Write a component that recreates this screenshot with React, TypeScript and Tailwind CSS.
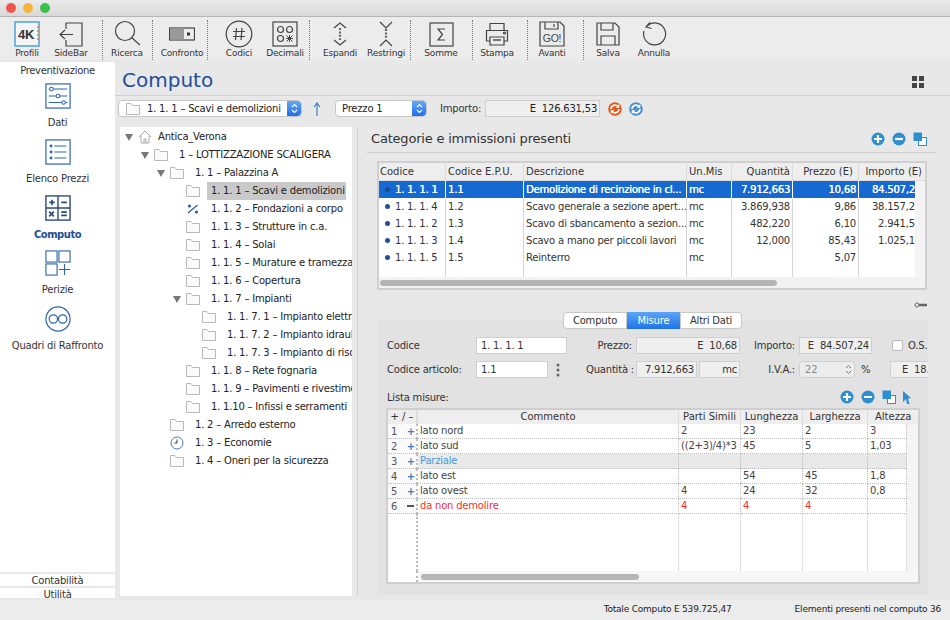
import React from "react";

const B = "#2f66a8";

function Ico({ children, w = 30, h = 30 }: { children: React.ReactNode; w?: number; h?: number }) {
  return (
    <svg width={w} height={h} viewBox={`0 0 ${w} ${h}`} fill="none" stroke="#444" strokeWidth="1.2">
      {children}
    </svg>
  );
}

function Tool({ label, cls, children }: { label: string; cls?: string; children: React.ReactNode }) {
  return (
    <div className={`w-[44px] h-full flex flex-col items-center shrink-0 ${cls ?? ""}`}>
      <div className="h-[30px] flex items-center justify-center">{children}</div>
      <div className="text-[9px] leading-[12px] text-[#333] whitespace-nowrap mt-[-2px]">{label}</div>
    </div>
  );
}

function Sep({ cls }: { cls: string }) {
  return <div className={`w-px h-[40px] mt-px border-l border-dotted border-[#777] shrink-0 ${cls}`} />;
}

function Toolbar() {
  return (
    <div className="h-[43px] bg-[#ececec] flex items-start pt-[2px] shrink-0">
      <Tool label="Profili" cls="ml-[5px]">
        <svg width="26" height="26" viewBox="0 0 26 26">
          <rect x="1" y="1" width="24" height="24" fill="#f4f4f4" stroke="#58a6d8" strokeWidth="1.6" />
          <text x="12" y="18" fontSize="13" fontWeight="700" textAnchor="middle" fill="#333" fontFamily="Liberation Sans, sans-serif">4K</text>
          <path d="M24 5v16" stroke="#d9822b" strokeWidth="1.5" strokeDasharray="2 2" />
        </svg>
      </Tool>
      <Tool label="SideBar">
        <Ico w={26} h={26}>
          <path d="M8 8V2h16v23H8v-6M15 13.5H3M7 9l-5 4.5L7 18" />
        </Ico>
      </Tool>
      <Sep cls="ml-[9px]" />
      <Tool label="Ricerca" cls="ml-[2px]">
        <Ico w={28} h={28}>
          <circle cx="12" cy="11" r="9.5" />
          <path d="M19 18l8 7" />
        </Ico>
      </Tool>
      <Sep cls="ml-[3px]" />
      <Tool label="Confronto" cls="ml-[7px]">
        <Ico w={26} h={14}>
          <rect x="0.5" y="1" width="25" height="12" />
          <rect x="1" y="1.5" width="14" height="11" fill="#999" stroke="none" />
          <rect x="18" y="5.5" width="3" height="3" fill="#333" stroke="none" />
        </Ico>
      </Tool>
      <Sep cls="ml-[3px]" />
      <Tool label="Codici" cls="ml-[9px]">
        <svg width="28" height="28" viewBox="0 0 28 28" fill="none" stroke="#444" strokeWidth="1.2">
          <circle cx="14" cy="14" r="12.8" />
          <path d="M11.5 8l-1 12M17 8l-1 12M8 11.5h12M8 16.5h12" />
        </svg>
      </Tool>
      <Tool label="Decimali" cls="ml-[2px]">
        <Ico w={26} h={26}>
          <rect x="1" y="1" width="24" height="24" />
          <circle cx="8.5" cy="8.5" r="3" />
          <circle cx="17.5" cy="8.5" r="3" />
          <circle cx="8.5" cy="17.5" r="3" />
          <path d="M14.5 14.5l6 6M20.5 14.5l-6 6M17.5 14v7M14 17.5h7" strokeWidth="1" />
        </Ico>
      </Tool>
      <Sep cls="ml-[2px]" />
      <Tool label="Espandi" cls="ml-[8px]">
        <Ico w={16} h={26}>
          <path d="M2 7l6-5 6 5M2 19l6 5 6-5" />
          <path d="M8 7v12" stroke="#666" strokeWidth="2.2" strokeDasharray="2 1.4" />
        </Ico>
      </Tool>
      <Tool label="Restringi" cls="ml-[2px]">
        <Ico w={16} h={26}>
          <path d="M2 1l6 6 6-6M2 25l6-6 6 6" />
          <path d="M8 8v10" stroke="#666" strokeWidth="2.2" strokeDasharray="2 1.4" />
        </Ico>
      </Tool>
      <Sep cls="ml-[2px]" />
      <Tool label="Somme" cls="ml-[8px]">
        <Ico w={25} h={25}>
          <rect x="1" y="1" width="23" height="23" />
          <path d="M16 7H9l4.5 5.5L9 18h7" />
        </Ico>
      </Tool>
      <Sep cls="ml-[9px]" />
      <Tool label="Stampa" cls="ml-[2px]">
        <Ico w={24} h={25}>
          <path d="M5 8V1.5h14V8" />
          <path d="M5 19H1.5V8.5h21V19H19" />
          <path d="M5 15h14v8H5z" />
          <path d="M8 18h8" strokeWidth="2" stroke="#777" />
          <circle cx="19.5" cy="11" r="1" />
        </Ico>
      </Tool>
      <Sep cls="ml-[8px]" />
      <Tool label="Avanti" cls="ml-[2px]">
        <Ico w={26} h={26}>
          <path d="M1 1h20l4 4v20H1z" />
          <path d="M6 1v7h13V1M15 3v3" />
          <text x="13" y="20.5" fontSize="10.5" textAnchor="middle" fill="#444" stroke="none" fontFamily="Liberation Sans, sans-serif">GO!</text>
        </Ico>
      </Tool>
      <Sep cls="ml-[9px]" />
      <Tool label="Salva" cls="ml-[2px]">
        <Ico w={24} h={24}>
          <path d="M1 1h18l4 4v18H1z" />
          <path d="M5 1v7h12V1M5 23v-9h14v9" />
        </Ico>
      </Tool>
      <Tool label="Annulla" cls="ml-[2px]">
        <Ico w={26} h={26}>
          <path d="M6 5a11 11 0 1 1-3 5" />
          <path d="M9 1.5L5 6l5.5 1.5" />
        </Ico>
      </Tool>
    </div>
  );
}

function SideItem({ label, active, cls, children }: { label: string; active?: boolean; cls: string; children: React.ReactNode }) {
  return (
    <div className={`flex flex-col items-center ${cls}`}>
      <div className="w-[26px] h-[26px]">{children}</div>
      <div className={`text-[10px] leading-[12px] mt-[8px] whitespace-nowrap ${active ? "font-bold text-[#234f92] tracking-[-0.5px]" : "text-[#333]"}`}>{label}</div>
    </div>
  );
}

function Sidebar() {
  return (
    <div className="w-[115px] shrink-0 bg-white flex flex-col mt-[2px] h-[536px]">
      <div className="h-[15px] pt-[3px] text-center text-[10px] leading-[12px] text-[#333] tracking-[-0.35px]">Preventivazione</div>
      <SideItem label="Dati" cls="mt-[6px]">
        <svg width="26" height="26" viewBox="0 0 28 28" fill="none" stroke={B} strokeWidth="1.1">
          <rect x="1" y="1" width="26" height="26" strokeWidth="1.3" />
          <path d="M9 6.5h15M4 6.5h1M4 14h8M16 14h8M4 21h14M22 21h2" />
          <circle cx="7" cy="6.5" r="2" />
          <circle cx="14" cy="14" r="2" />
          <circle cx="20" cy="21" r="2" />
        </svg>
      </SideItem>
      <SideItem label="Elenco Prezzi" cls="mt-[10px]">
        <svg width="26" height="26" viewBox="0 0 28 28" fill="none" stroke={B} strokeWidth="1.2">
          <rect x="1" y="1" width="26" height="26" strokeWidth="1.3" />
          <path d="M10 7.5h13M10 14h13M10 20.5h13" />
          <circle cx="6.5" cy="7.5" r="1" fill={B} />
          <circle cx="6.5" cy="14" r="1" fill={B} />
          <circle cx="6.5" cy="20.5" r="1" fill={B} />
        </svg>
      </SideItem>
      <SideItem label="Computo" active cls="mt-[10px]">
        <svg width="26" height="26" viewBox="0 0 28 28" fill="none" stroke="#2b4a78" strokeWidth="1.5">
          <rect x="1" y="1" width="26" height="26" />
          <path d="M14 1v26M1 14h26" />
          <path d="M4.5 8h6M7.5 5v6M17.5 8h6M4.5 18l5 5M9.5 18l-5 5M17.5 18.5h6M17.5 22h6" strokeWidth="1.8" />
        </svg>
      </SideItem>
      <SideItem label="Perizie" cls="mt-[9px]">
        <svg width="26" height="26" viewBox="0 0 28 28" fill="none" stroke={B} strokeWidth="1.2">
          <rect x="1" y="1" width="12" height="12" />
          <rect x="15" y="1" width="12" height="12" />
          <rect x="1" y="15" width="12" height="12" />
          <path d="M21 15v12M15 21h12" />
        </svg>
      </SideItem>
      <SideItem label="Quadri di Raffronto" cls="mt-[10px]">
        <svg width="26" height="26" viewBox="0 0 28 28" fill="none" stroke={B} strokeWidth="1.3">
          <circle cx="14" cy="14" r="13" />
          <circle cx="9" cy="14" r="4.5" />
          <circle cx="19" cy="14" r="4.5" />
        </svg>
      </SideItem>
      <div className="flex-1" />
      <div className="h-[12px] text-center text-[10px] leading-[14px] text-[#333] border-t-2 border-[#e8e8e8] box-content overflow-hidden">Contabilità</div>
      <div className="h-[10px] text-center text-[10px] leading-[13px] text-[#333] border-t-2 border-[#e8e8e8] box-content overflow-hidden">Utilità</div>
    </div>
  );
}

function Folder() {
  return (
    <svg width="14" height="12" fill="#fbfbfb" stroke="#b8b8b8" strokeWidth="1">
      <path d="M.5 11.5V.5h4.5l1.5 2h7v9z" />
    </svg>
  );
}

function Tri() {
  return (
    <svg width="8" height="7" className="mx-auto">
      <path d="M0 0h8L4 7z" fill="#777" />
    </svg>
  );
}

const padCls = ["pl-[4px]", "pl-[20px]", "pl-[36px]", "pl-[52px]", "pl-[68px]"];

function TreeRow({ lvl, text, open, icon, sel, root }: { lvl: number; text: string; open?: boolean; icon?: React.ReactNode; sel?: boolean; root?: boolean }) {
  return (
    <div className={`h-[18px] flex items-center whitespace-nowrap ${padCls[lvl]}`}>
      <div className="w-[10px] shrink-0">{open && <Tri />}</div>
      <div className="w-[14px] ml-[4px] shrink-0 flex justify-center">{icon ?? <Folder />}</div>
      <div className={`${root ? "ml-[6px]" : "ml-[7px] pl-[4px]"} leading-[18px] ${sel ? "bg-[#c9c9c9] w-[139px] shrink-0" : ""}`}>{text}</div>
    </div>
  );
}

function Tree() {
  return (
    <div className="w-[232px] ml-[5px] mt-[10px] h-[469px] bg-white text-[10px] text-[#222] overflow-hidden pt-[1px] shrink-0">
      <TreeRow lvl={0} root open text="Antica_Verona" icon={
        <svg width="14" height="14" fill="none" stroke="#aaa"><path d="M1 7l6-6 6 6M3 6v7h8V6M6 13V9h2v4" /></svg>
      } />
      <TreeRow lvl={1} open text="1 – LOTTIZZAZIONE SCALIGERA" />
      <TreeRow lvl={2} open text="1. 1 – Palazzina A" />
      <TreeRow lvl={3} sel text="1. 1. 1 – Scavi e demolizioni" />
      <TreeRow lvl={3} text="1. 1. 2 – Fondazioni a corpo" icon={
        <svg width="12" height="10" fill="#2a5ea8" stroke="none"><circle cx="2.5" cy="2" r="1.6" /><circle cx="9.5" cy="8" r="1.6" /><path d="M1 9L10.5 1" stroke="#2a5ea8" strokeWidth="1.2" /></svg>
      } />
      <TreeRow lvl={3} text="1. 1. 3 – Strutture in c.a." />
      <TreeRow lvl={3} text="1. 1. 4 – Solai" />
      <TreeRow lvl={3} text="1. 1. 5 – Murature e tramezzature" />
      <TreeRow lvl={3} text="1. 1. 6 – Copertura" />
      <TreeRow lvl={3} open text="1. 1. 7 – Impianti" />
      <TreeRow lvl={4} text="1. 1. 7. 1 – Impianto elettrico" />
      <TreeRow lvl={4} text="1. 1. 7. 2 – Impianto idraulico" />
      <TreeRow lvl={4} text="1. 1. 7. 3 – Impianto di riscaldamento" />
      <TreeRow lvl={3} text="1. 1. 8 – Rete fognaria" />
      <TreeRow lvl={3} text="1. 1. 9 – Pavimenti e rivestimenti" />
      <TreeRow lvl={3} text="1. 1.10 – Infissi e serramenti" />
      <TreeRow lvl={2} text="1. 2 – Arredo esterno" />
      <TreeRow lvl={2} text="1. 3 – Economie" icon={
        <svg width="14" height="14" fill="none" stroke="#3f7cc0"><circle cx="7" cy="7" r="6" /><path d="M7 3.5V7H4.5" stroke="#333" /></svg>
      } />
      <TreeRow lvl={2} text="1. 4 – Oneri per la sicurezza" />
    </div>
  );
}

function Stepper() {
  return (
    <div className="w-[14px] h-full bg-gradient-to-b from-[#62a8f8] to-[#1f6fe6] rounded-r-[4px] flex items-center justify-center shrink-0">
      <svg width="7" height="11" fill="none" stroke="#fff" strokeWidth="1.2"><path d="M1 4l2.5-2.5L6 4M1 7l2.5 2.5L6 7" /></svg>
    </div>
  );
}

function CircleBtn({ minus }: { minus?: boolean }) {
  return (
    <svg width="14" height="14" viewBox="0 0 14 14">
      <circle cx="7" cy="7" r="6.5" fill="#2d8fd0" />
      <path d={minus ? "M3 7h8" : "M7 3v8M3 7h8"} stroke="#fff" strokeWidth="2.2" />
    </svg>
  );
}

function CopyBtn() {
  return (
    <svg width="14" height="14" viewBox="0 0 14 14">
      <rect x="5.5" y="5.5" width="8" height="8" fill="#fff" stroke="#2d8fd0" />
      <rect x="0.5" y="0.5" width="8.5" height="8.5" fill="#2d8fd0" />
    </svg>
  );
}

function Sync({ color }: { color: string }) {
  return (
    <svg width="14" height="14" viewBox="0 0 14 14">
      <circle cx="7" cy="7" r="6.8" fill={color} />
      <path d="M3 7a4 4 0 0 1 7-2.5M11 7a4 4 0 0 1-7 2.5" fill="none" stroke="#fff" strokeWidth="1.7" />
      <path d="M11.3 2v3.8H7.5zM2.7 12V8.2h3.8z" fill="#fff" stroke="none" />
    </svg>
  );
}

function SelectRow() {
  return (
    <div className="h-[17px] flex items-center ml-[3px] mt-[4px] shrink-0">
      <div className="w-[184px] h-[17px] bg-white rounded-[4px] border border-[#c6c6c6] flex items-center text-[10px] text-[#222]">
        <div className="ml-[7px] w-[14px] flex"><Folder /></div>
        <div className="ml-[7px] flex-1 whitespace-nowrap">1. 1. 1 – Scavi e demolizioni</div>
        <Stepper />
      </div>
      <svg width="10" height="14" className="ml-[10px]" fill="none" stroke="#3d7fc4" strokeWidth="1.2"><path d="M5 14V1M2 5l3-4 3 4" /></svg>
      <div className="ml-[13px] w-[92px] h-[17px] bg-white rounded-[4px] border border-[#c6c6c6] flex items-center text-[10px] text-[#222]">
        <div className="ml-[6px] flex-1">Prezzo 1</div>
        <Stepper />
      </div>
      <div className="ml-[13px] text-[10px] text-[#333]">Importo:</div>
      <div className="ml-[4px] w-[115px] h-[17px] bg-[#efefef] border border-[#cfcfcf] text-right pr-[2px] text-[10px] leading-[15px] text-[#222]">E&nbsp;&nbsp;126.631,53</div>
      <div className="ml-[8px] flex"><Sync color="#e2581b" /></div>
      <div className="ml-[7px] flex"><Sync color="#4a8fcf" /></div>
    </div>
  );
}

const c1 = "grid grid-cols-[67px_78px_163px_45px_61px_66px_56px_10px]";

function Row1({ v, sel }: { v: string[]; sel?: boolean }) {
  const base = `h-[17px] leading-[17px] border-r whitespace-nowrap overflow-hidden ${sel ? "border-[#ffffff] text-white" : "border-[#d5d5d5] text-[#333]"}`;
  return (
    <div className={`${c1} ${sel ? "bg-[#1769d2] [text-shadow:0.3px_0_0_#fff]" : "bg-white"} h-[17px] text-[10px]`}>
      <div className={`${base} pl-[3px] flex items-center`}>
        <span className={`w-[5px] h-[5px] rounded-full ml-[3px] mr-[5px] shrink-0 ${sel ? "bg-[#1b4a94]" : "bg-[#234f96]"}`} />
        {v[0]}
      </div>
      <div className={`${base} pl-[2px]`}>{v[1]}</div>
      <div className={`${base} pl-[2px]`}>{v[2]}</div>
      <div className={`${base} pl-[2px]`}>{v[3]}</div>
      <div className={`${base} text-right pr-[2px]`}>{v[4]}</div>
      <div className={`${base} text-right pr-[2px]`}>{v[5]}</div>
      <div className={`h-[17px] overflow-hidden ${sel ? "text-white" : "text-[#333]"}`}><div className="w-[62px] text-right leading-[17px]">{v[6]}</div></div>
      <div className="bg-[#f4f4f4]" />
    </div>
  );
}

function Table1() {
  const h = "h-[17px] leading-[17px] border-r border-[#dcdcdc] whitespace-nowrap text-[#333]";
  return (
    <div className="ml-[19px] w-[550px] h-[129px] border-2 border-[#cfcfcf] bg-white flex flex-col overflow-hidden shrink-0">
      <div className={`${c1} bg-[#eeeeee] text-[10px] tracking-normal h-[18px] border-b border-[#dcdcdc] shrink-0`}>
        <div className={`${h} pl-[1px]`}>Codice</div>
        <div className={`${h} pl-[2px]`}>Codice E.P.U.</div>
        <div className={`${h} pl-[2px]`}>Descrizione</div>
        <div className={`${h} pl-[2px]`}>Un.Mis</div>
        <div className={`${h} text-right pr-[2px]`}>Quantità</div>
        <div className={`${h} text-right pr-[5px]`}>Prezzo (E)</div>
        <div className="col-span-2 h-[17px] leading-[17px] text-[#333] text-right pr-[3px] whitespace-nowrap">Importo (E)</div>
      </div>
      <Row1 sel v={["1. 1. 1. 1", "1.1", "Demolizione di recinzione in cl...", "mc", "7.912,663", "10,68", "84.507,24"]} />
      <Row1 v={["1. 1. 1. 4", "1.2", "Scavo generale a sezione apert...", "mc", "3.869,938", "9,86", "38.157,27"]} />
      <Row1 v={["1. 1. 1. 2", "1.3", "Scavo di sbancamento a sezion...", "mc", "482,220", "6,10", "2.941,54"]} />
      <Row1 v={["1. 1. 1. 3", "1.4", "Scavo a mano per piccoli lavori", "mc", "12,000", "85,43", "1.025,16"]} />
      <Row1 v={["1. 1. 1. 5", "1.5", "Reinterro", "mc", "", "5,07", ""]} />
      <div className={`${c1} flex-1`}>
        {[0, 1, 2, 3, 4, 5].map((i) => <div key={i} className="border-r border-[#d5d5d5]" />)}
        <div />
        <div className="bg-[#f4f4f4]" />
      </div>
      <div className="h-[11px] bg-[#f2f2f2] flex items-center pl-[1px] shrink-0">
        <div className="w-[397px] h-[6px] rounded-full bg-[#b5b5b5]" />
      </div>
    </div>
  );
}

function Field({ w, txt, ro, right, cls }: { w: string; txt: string; ro?: boolean; right?: boolean; cls?: string }) {
  return (
    <div className={`${w} h-[17px] border border-[#cfcfcf] ${ro ? "bg-[#efefef]" : "bg-white"} ${right ? "text-right pr-[2px]" : cls ? "" : "pl-[4px]"} leading-[15px] text-[#333] whitespace-pre overflow-hidden shrink-0 ${cls ?? ""}`}>
      {txt}
    </div>
  );
}

const c2 = "grid grid-cols-[30px_261px_62px_62px_65px_39px_11px]";

function Row2({ n, sign, v, kind }: { n: number; sign: string; v: string[]; kind?: "blue" | "red" }) {
  const col = kind === "red" ? "text-[#f52f2f]" : kind === "blue" ? "text-[#4a9ad8]" : "text-[#444]";
  const bg = kind === "blue" ? "bg-[#e9e9e9]" : "bg-white";
  const cell = `h-[15px] leading-[13px] pl-[2px] border-r border-b border-dotted border-[#bdbdbd] whitespace-nowrap overflow-hidden ${col} ${bg}`;
  return (
    <div className={`${c2} h-[15px] text-[10px]`}>
      <div className="h-[15px] bg-[#fafafa] border-r-2 border-b border-dotted border-[#bdbdbd] flex items-center justify-between pl-[3px] pr-[1px] text-[#555]">
        <span>{n}</span>
        {sign === "+" ? (
          <span className="text-[#3f7cc0] font-bold">+</span>
        ) : (
          <span className="w-[7px] h-[2px] bg-[#555] mr-[1px]" />
        )}
      </div>
      {v.map((x, i) => <div key={i} className={cell}>{x}</div>)}
      <div className="bg-[#f4f4f4]" />
    </div>
  );
}

function Table2() {
  const h = "h-[14px] leading-[14px] text-center border-r border-[#dcdcdc] text-[#333] whitespace-nowrap";
  return (
    <div className="ml-[9px] mt-[4px] w-[534px] h-[176px] border-2 border-[#cfcfcf] bg-white flex flex-col overflow-hidden shrink-0">
      <div className={`${c2} bg-[#eeeeee] text-[10px] tracking-normal h-[14px] shrink-0`}>
        <div className={`${h} border-r-2`}>+ / –</div>
        <div className={h}>Commento</div>
        <div className={h}>Parti Simili</div>
        <div className={h}>Lunghezza</div>
        <div className={h}>Larghezza</div>
        <div className="h-[14px] leading-[14px] text-[#333] whitespace-nowrap col-span-2 pl-[7px]">Altezza</div>
      </div>
      <Row2 n={1} sign="+" v={["lato nord", "2", "23", "2", "3"]} />
      <Row2 n={2} sign="+" v={["lato sud", "((2+3)/4)*3", "45", "5", "1,03"]} />
      <Row2 n={3} sign="+" kind="blue" v={["Parziale", "", "", "", ""]} />
      <Row2 n={4} sign="+" v={["lato est", "", "54", "45", "1,8"]} />
      <Row2 n={5} sign="+" v={["lato ovest", "4", "24", "32", "0,8"]} />
      <Row2 n={6} sign="-" kind="red" v={["da non demolire", "4", "4", "4", ""]} />
      <div className={`${c2} flex-1`}>
        <div className="border-r-2 border-dotted border-[#bdbdbd]" />
        {[0, 1, 2, 3, 4].map((i) => <div key={i} className="border-r border-dotted border-[#c8c8c8]" />)}
        <div className="bg-[#f4f4f4]" />
      </div>
      <div className="h-[11px] flex shrink-0">
        <div className="w-[30px] border-r-2 border-dotted border-[#bdbdbd]" />
        <div className="flex-1 bg-[#f6f6f6] flex items-center pl-[3px]">
          <div className="w-[218px] h-[6px] rounded-full bg-[#b5b5b5]" />
        </div>
      </div>
    </div>
  );
}

function Detail() {
  const label = "text-right pr-[4px] text-[#333] whitespace-nowrap shrink-0";
  return (
    <div className="ml-[19px] w-[551px] shrink-0 text-[10px]">
      <div className="relative z-10 flex ml-[186px] h-[17px]">
        <div className="w-[64px] h-[17px] bg-white border border-[#c8c8c8] rounded-l-[4px] text-center leading-[15px] text-[#333]">Computo</div>
        <div className="w-[53px] h-[17px] bg-gradient-to-b from-[#5aa5f8] to-[#1f72e8] text-white text-center leading-[17px]">Misure</div>
        <div className="w-[62px] h-[17px] bg-white border border-[#c8c8c8] rounded-r-[4px] text-center leading-[15px] text-[#333]">Altri Dati</div>
      </div>
      <div className="mt-[-9px] h-[275px] pt-[17px] bg-[#e2e2e2] rounded-[4px] overflow-hidden flex flex-col">
        <div className="flex items-center h-[17px] shrink-0">
          <div className="w-[99px] pl-[10px] text-[#333] shrink-0">Codice</div>
          <Field w="w-[91px]" txt="1. 1. 1. 1" />
          <div className={`w-[69px] ${label}`}>Prezzo:</div>
          <Field w="w-[104px]" txt="E  10,68" ro right />
          <div className={`w-[59px] ${label}`}>Importo:</div>
          <Field w="w-[73px]" txt="E  84.507,24" ro right />
          <div className="ml-[20px] w-[11px] h-[11px] bg-white border border-[#b8b8b8] rounded-[2px] shrink-0" />
          <div className="ml-[5px] text-[#333] whitespace-nowrap shrink-0">O.S.</div>
        </div>
        <div className="flex items-center h-[17px] mt-[7px] shrink-0">
          <div className="w-[99px] pl-[10px] text-[#333] whitespace-nowrap shrink-0">Codice articolo:</div>
          <Field w="w-[72px]" txt="1.1" />
          <svg width="4" height="14" className="ml-[8px] shrink-0" fill="#666"><circle cx="2" cy="2" r="1.5" /><circle cx="2" cy="7" r="1.5" /><circle cx="2" cy="12" r="1.5" /></svg>
          <div className="w-[76px] text-right pr-[2px] text-[#333] whitespace-nowrap shrink-0">Quantità :</div>
          <Field w="w-[61px]" txt="7.912,663" ro right />
          <Field w="w-[41px]" txt="mc" ro right cls="ml-[2px]" />
          <div className={`w-[59px] ${label}`}>I.V.A.:</div>
          <div className="w-[56px] h-[17px] border border-[#cfcfcf] rounded-[3px] bg-[#ececec] flex items-center pl-[5px] text-[#888] shrink-0">
            <span className="flex-1">22</span>
            <svg width="7" height="11" className="mr-[2px]" fill="none" stroke="#777"><path d="M1 4l2.5-2.5L6 4M1 7l2.5 2.5L6 7" /></svg>
          </div>
          <div className="ml-[6px] w-[29px] text-[#333] shrink-0">%</div>
          <Field w="w-[50px]" txt="E  18.589,59" ro cls="pl-[11px]" />
        </div>
        <div className="flex items-center h-[14px] mt-[12px] shrink-0">
          <div className="pl-[10px] text-[#333] flex-1">Lista misure:</div>
          <div className="flex gap-[7px] items-center mr-[17px]">
            <CircleBtn /><CircleBtn minus /><CopyBtn />
            <svg width="8" height="13" fill="#2d8fd0"><path d="M0 0l8 7-3 .5L6.5 13 4 13 3 8 0 11z" /></svg>
          </div>
        </div>
        <Table2 />
      </div>
    </div>
  );
}

function Content() {
  return (
    <div className="flex-1 flex flex-col min-w-0 overflow-hidden mt-[9px]">
      <div className="h-[26px] flex items-center ml-[13px] mr-[23px] shrink-0">
        <div className="text-[13px] text-[#333] whitespace-nowrap flex-1 pb-[1px]">Categorie e immissioni presenti</div>
        <div className="flex gap-[7px]"><CircleBtn /><CircleBtn minus /><CopyBtn /></div>
      </div>
      <div className="h-px bg-[#cfcfcf] ml-[9px] mr-[14px] shrink-0" />
      <div className="h-[8px] shrink-0" />
      <Table1 />
      <div className="h-[22px] flex justify-end pr-[22px] items-start pt-[12px] shrink-0">
        <svg width="14" height="6" fill="none" stroke="#666"><circle cx="3" cy="3" r="2" /><path d="M5 3h8" strokeWidth="2.5" /></svg>
      </div>
      <Detail />
    </div>
  );
}

export default function App() {
  return (
    <div className="w-[950px] h-[620px] flex flex-col overflow-hidden bg-[#e8e8e8] tracking-[-0.2px] font-['DejaVu_Sans',sans-serif]">
      <div className="h-[17px] shrink-0 bg-gradient-to-b from-[#ebebeb] to-[#d8d8d8] border-b border-[#b4b4b4] flex items-center pl-[6px] gap-[7px]">
        <span className="w-[10px] h-[10px] rounded-full bg-[#f0544c]" />
        <span className="w-[10px] h-[10px] rounded-full bg-[#f5b53a]" />
        <span className="w-[10px] h-[10px] rounded-full bg-[#3cc04a]" />
      </div>
      <Toolbar />
      <div className="h-[540px] flex shrink-0">
        <Sidebar />
        <div className="flex-1 flex flex-col min-w-0">
          <div className="h-[35px] flex items-center justify-between ml-[7px] mr-[26px] shrink-0">
            <div className="text-[20px] text-[#214f9c] leading-[24px] mt-[5px] tracking-normal">Computo</div>
            <svg width="12" height="12" fill="#444" className="mt-[8px]"><rect width="5" height="5" /><rect x="7" width="5" height="5" /><rect y="7" width="5" height="5" /><rect x="7" y="7" width="5" height="5" /></svg>
          </div>
          <div className="h-px bg-[#d0d0d0] shrink-0" />
          <SelectRow />
          <div className="flex flex-1 min-h-0">
            <Tree />
            <div className="ml-[5px] mt-[10px] w-px h-[469px] bg-[#d0d0d0] shrink-0" />
            <Content />
          </div>
        </div>
      </div>
      <div className="flex-1 bg-[#ececec] flex items-center justify-end text-[9px] text-[#222] pr-[9px]">
        <span>Totale Computo E 539.725,47</span>
        <span className="ml-[63px]">Elementi presenti nel computo 36</span>
      </div>
    </div>
  );
}
